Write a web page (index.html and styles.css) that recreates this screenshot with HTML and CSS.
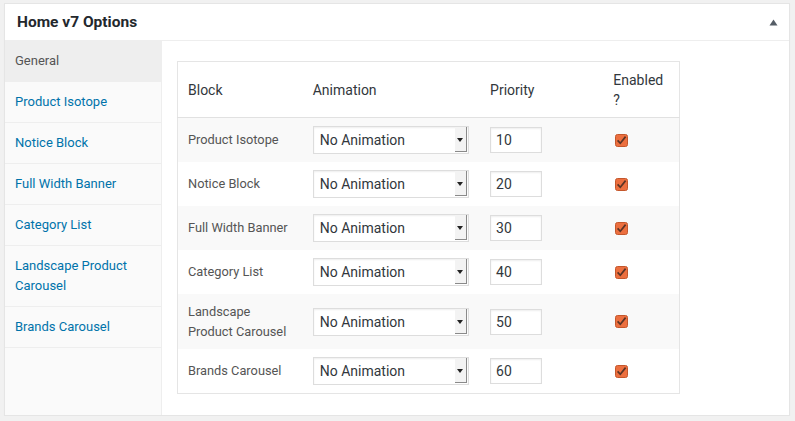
FILE: index.html
```html
<!DOCTYPE html>
<html lang="en">
<head>
<meta charset="utf-8">
<title>Home v7 Options</title>
<link rel="stylesheet" href="styles.css">
</head>
<body>
<div class="wrap">
  <div class="postbox">
    <div class="postbox-header">
      <h2 class="hndle">Home v7 Options</h2>
      <span class="toggle"><svg width="9" height="7" viewBox="0 0 9 7"><path d="M4.5 0.5 L8.5 6.5 L0.5 6.5 Z" fill="#555d66"/></svg></span>
    </div>
    <div class="panel">
      <ul class="tabs">
        <li class="tab active">General</li>
        <li class="tab">Product Isotope</li>
        <li class="tab">Notice Block</li>
        <li class="tab">Full Width Banner</li>
        <li class="tab">Category List</li>
        <li class="tab">Landscape Product Carousel</li>
        <li class="tab">Brands Carousel</li>
      </ul>
      <div class="content">
        <table class="blocks">
          <colgroup>
            <col class="c-block"><col class="c-anim"><col class="c-prio"><col class="c-en">
          </colgroup>
          <thead>
            <tr><th>Block</th><th>Animation</th><th>Priority</th><th>Enabled ?</th></tr>
          </thead>
          <tbody>
            <tr class="alt">
              <td class="label">Product Isotope</td>
              <td><span class="sel"><span class="sel-text">No Animation</span><span class="sel-btn"></span></span></td>
              <td><span class="num">10</span></td>
              <td><span class="chk"><svg width="13" height="13" viewBox="0 0 13 13"><rect x="0.5" y="0.5" width="12" height="12" rx="2" fill="#ec6f3f" stroke="#c4572c"/><path d="M2.6 6.4 L5.3 9.3 L10.6 2.6" fill="none" stroke="#5b3426" stroke-width="1.7"/></svg></span></td>
            </tr>
            <tr>
              <td class="label">Notice Block</td>
              <td><span class="sel"><span class="sel-text">No Animation</span><span class="sel-btn"></span></span></td>
              <td><span class="num">20</span></td>
              <td><span class="chk"><svg width="13" height="13" viewBox="0 0 13 13"><rect x="0.5" y="0.5" width="12" height="12" rx="2" fill="#ec6f3f" stroke="#c4572c"/><path d="M2.6 6.4 L5.3 9.3 L10.6 2.6" fill="none" stroke="#5b3426" stroke-width="1.7"/></svg></span></td>
            </tr>
            <tr class="alt">
              <td class="label">Full Width Banner</td>
              <td><span class="sel"><span class="sel-text">No Animation</span><span class="sel-btn"></span></span></td>
              <td><span class="num">30</span></td>
              <td><span class="chk"><svg width="13" height="13" viewBox="0 0 13 13"><rect x="0.5" y="0.5" width="12" height="12" rx="2" fill="#ec6f3f" stroke="#c4572c"/><path d="M2.6 6.4 L5.3 9.3 L10.6 2.6" fill="none" stroke="#5b3426" stroke-width="1.7"/></svg></span></td>
            </tr>
            <tr>
              <td class="label">Category List</td>
              <td><span class="sel"><span class="sel-text">No Animation</span><span class="sel-btn"></span></span></td>
              <td><span class="num">40</span></td>
              <td><span class="chk"><svg width="13" height="13" viewBox="0 0 13 13"><rect x="0.5" y="0.5" width="12" height="12" rx="2" fill="#ec6f3f" stroke="#c4572c"/><path d="M2.6 6.4 L5.3 9.3 L10.6 2.6" fill="none" stroke="#5b3426" stroke-width="1.7"/></svg></span></td>
            </tr>
            <tr class="alt">
              <td class="label">Landscape Product Carousel</td>
              <td><span class="sel"><span class="sel-text">No Animation</span><span class="sel-btn"></span></span></td>
              <td><span class="num">50</span></td>
              <td><span class="chk"><svg width="13" height="13" viewBox="0 0 13 13"><rect x="0.5" y="0.5" width="12" height="12" rx="2" fill="#ec6f3f" stroke="#c4572c"/><path d="M2.6 6.4 L5.3 9.3 L10.6 2.6" fill="none" stroke="#5b3426" stroke-width="1.7"/></svg></span></td>
            </tr>
            <tr>
              <td class="label">Brands Carousel</td>
              <td><span class="sel"><span class="sel-text">No Animation</span><span class="sel-btn"></span></span></td>
              <td><span class="num">60</span></td>
              <td><span class="chk"><svg width="13" height="13" viewBox="0 0 13 13"><rect x="0.5" y="0.5" width="12" height="12" rx="2" fill="#ec6f3f" stroke="#c4572c"/><path d="M2.6 6.4 L5.3 9.3 L10.6 2.6" fill="none" stroke="#5b3426" stroke-width="1.7"/></svg></span></td>
            </tr>
          </tbody>
        </table>
      </div>
    </div>
  </div>
</div>
</body>
</html>
```
FILE: styles.css
```css
html, body {
  margin: 0;
  padding: 0;
  background: #f1f1f1;
  font-family: Roboto, "Liberation Sans", sans-serif;
  color: #444;
}
.wrap {
  padding: 3px 5px 0 4px;
}
.postbox {
  background: #fff;
  border: 1px solid #e5e5e5;
  box-shadow: 0 1px 1px rgba(0,0,0,.04);
}
.postbox-header {
  display: flex;
  align-items: center;
  justify-content: space-between;
  border-bottom: 1px solid #eee;
}
.hndle {
  margin: 0;
  padding: 8px 12px 8px 12px;
  font-size: 15.5px;
  line-height: 20px;
  font-weight: 700;
  color: #23282d;
}
.toggle {
  display: flex;
  margin-right: 11px;
  margin-top: 1px;
}
.panel {
  display: flex;
}
.tabs {
  list-style: none;
  margin: 0;
  padding: 0;
  width: 156px;
  flex: none;
  background: #fafafa;
  border-right: 1px solid #eee;
}
.tab {
  padding: 10px 10px;
  font-size: 13px;
  line-height: 20px;
  color: #0073aa;
  border-bottom: 1px solid #eee;
}
.tab.active {
  background: #eee;
  color: #555;
}
.content {
  flex: 1;
  padding: 20px 15px 21px 15px;
}
.blocks {
  width: 503px;
  table-layout: fixed;
  border-collapse: collapse;
  border: 1px solid #e5e5e5;
}
.c-block { width: 125px; }
.c-anim { width: 177px; }
.c-prio { width: 123px; }
.c-en { width: 76px; }
.blocks th {
  text-align: left;
  font-weight: 400;
  font-size: 14px;
  line-height: 1.4em;
  color: #32373c;
  padding: 9px 10px 7px;
  border-bottom: 1px solid #e1e1e1;
}
.blocks td {
  padding: 8px 10px;
  font-size: 12.8px;
  line-height: 19.5px;
  color: #555;
  vertical-align: middle;
}
.blocks tr.alt td {
  background: #f9f9f9;
}
.sel {
  display: flex;
  align-items: stretch;
  width: 156px;
  height: 28px;
  box-sizing: border-box;
  border: 1px solid #ddd;
  background: #fff;
  box-shadow: inset 0 1px 2px rgba(0,0,0,.07);
}
.sel-text {
  flex: 1;
  padding-left: 6px;
  font-size: 14px;
  line-height: 26px;
  color: #32373c;
}
.sel-btn {
  position: relative;
  width: 11px;
  margin: 0 1px 1px 0;
  background: #f3f3f3;
  border-right: 1px solid #8a8a8a;
  border-bottom: 1px solid #8a8a8a;
}
.sel-btn::after {
  content: "";
  position: absolute;
  left: 2px;
  top: 11px;
  border-left: 3px solid transparent;
  border-right: 3px solid transparent;
  border-top: 4px solid #222;
}
.num {
  display: block;
  width: 52px;
  height: 26px;
  box-sizing: border-box;
  border: 1px solid #ddd;
  background: #fff;
  box-shadow: inset 0 1px 2px rgba(0,0,0,.07);
  padding-left: 5px;
  font-size: 14px;
  line-height: 24px;
  color: #32373c;
}
.chk {
  display: flex;
  margin-left: 2px;
}
```
